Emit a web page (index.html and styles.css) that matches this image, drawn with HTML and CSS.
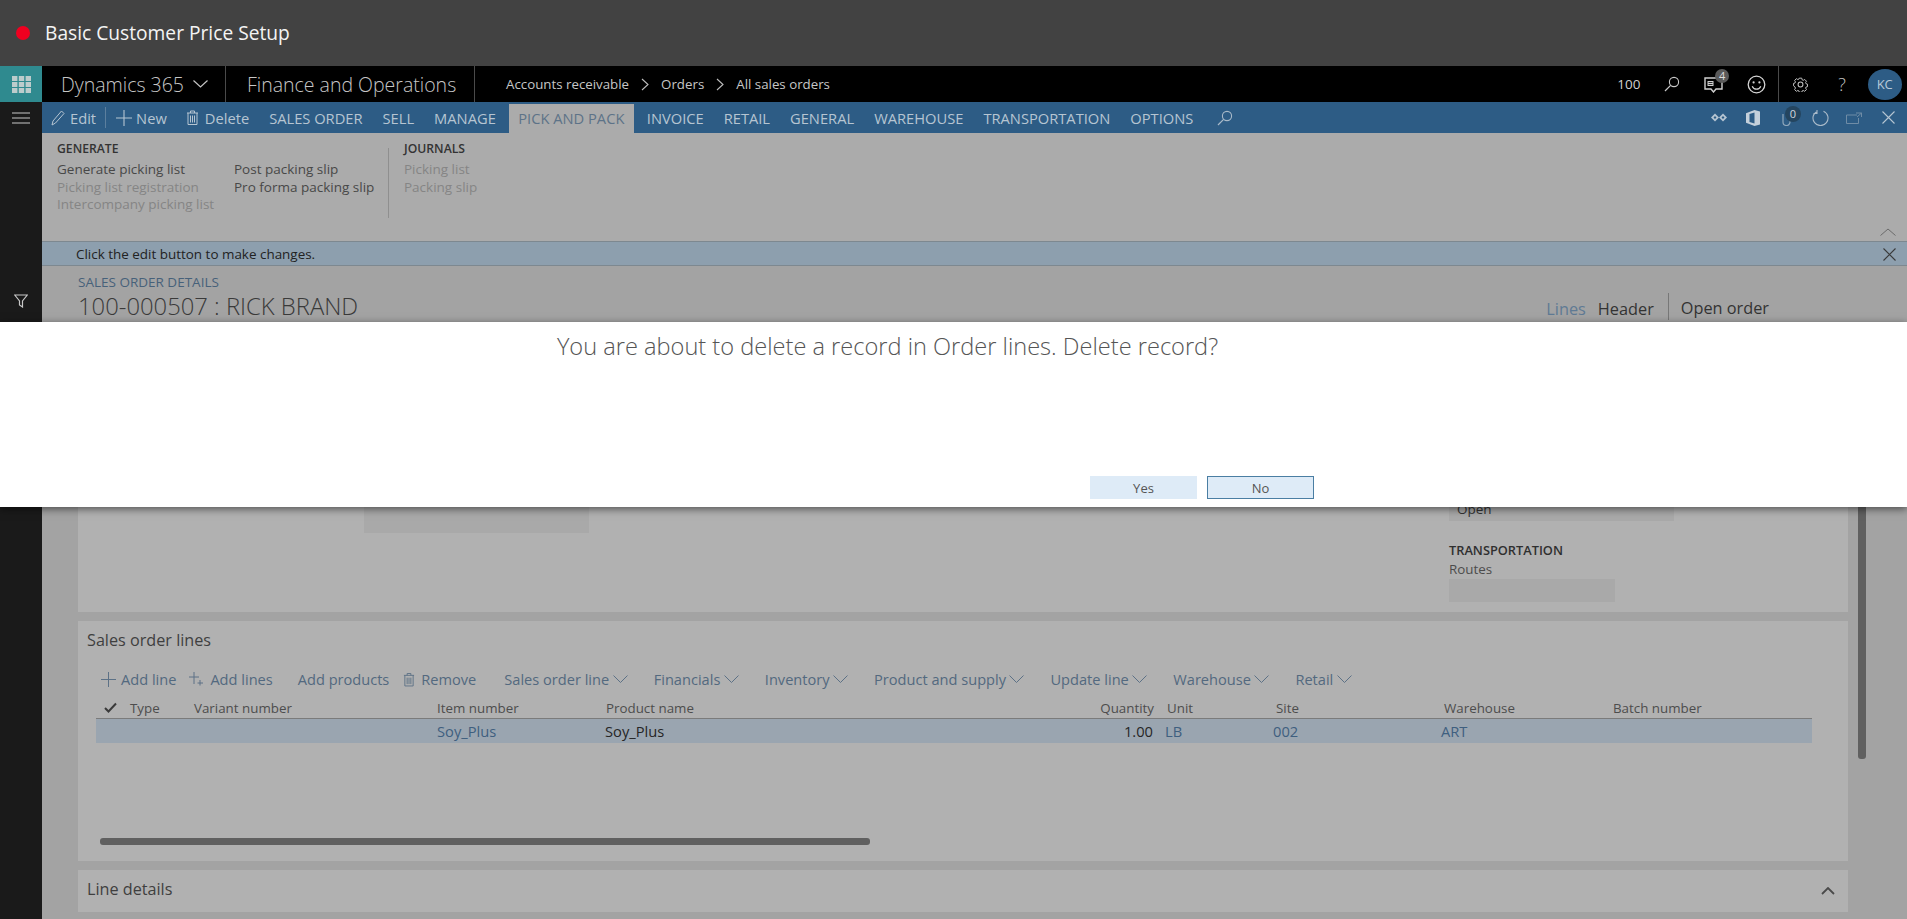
FILE: index.html
```html
<!DOCTYPE html>
<html lang="en">
<head>
  <meta charset="UTF-8" />
  <meta name="viewport" content="width=device-width, initial-scale=1.0"/>
  <title>Basic Customer Price Setup</title>
  <link rel="stylesheet" href="styles.css">
</head>
<body>
  <header class="titlebar">
    <span class="rec-dot"></span>
    <span class="titlebar-text">Basic Customer Price Setup</span>
  </header>

  <nav class="navbar">
    <div class="waffle">
      <svg width="19" height="17" viewBox="0 0 19 17"><g fill="#bccccc"><rect x="0" y="0" width="5.400" height="5"/><rect x="6.800" y="0" width="5.400" height="5"/><rect x="13.600" y="0" width="5.400" height="5"/><rect x="0" y="6" width="5.400" height="5"/><rect x="6.800" y="6" width="5.400" height="5"/><rect x="13.600" y="6" width="5.400" height="5"/><rect x="0" y="12" width="5.400" height="5"/><rect x="6.800" y="12" width="5.400" height="5"/><rect x="13.600" y="12" width="5.400" height="5"/></g></svg>
    </div>
    <div class="brand">Dynamics 365
      <svg class="brand-chev" width="15" height="8" viewBox="0 0 15 8"><path d="M.5.500l7 6.500 7-6.500" fill="none" stroke="#c4c4c4" stroke-width="1.200"/></svg>
    </div>
    <div class="module">Finance and Operations</div>
    <div class="crumbs">
      <span>Accounts receivable</span>
      <svg width="8" height="13" viewBox="0 0 8 13"><path d="M1 1l6 5.500L1 12" fill="none" stroke="#bdbdbd" stroke-width="1.100"/></svg>
      <span>Orders</span>
      <svg width="8" height="13" viewBox="0 0 8 13"><path d="M1 1l6 5.500L1 12" fill="none" stroke="#bdbdbd" stroke-width="1.100"/></svg>
      <span>All sales orders</span>
    </div>
    <div class="nav-right">
      <span class="company">100</span>
      <span class="nav-cell"><svg width="16" height="16" viewBox="0 0 16 16"><circle cx="10" cy="6" r="4.600" fill="none" stroke="#c8c8c8" stroke-width="1.100"/><path d="M6.600 9.400L1 15" stroke="#c8c8c8" stroke-width="1.200"/></svg></span>
      <span class="nav-cell msg-cell">
        <svg width="20" height="17" viewBox="0 0 20 17"><path d="M1 2h17v11h-6l-2.500 3L7 13H1z" fill="none" stroke="#d0d0d0" stroke-width="1.400"/><path d="M3.500 5h6v5h-6z" fill="#d0d0d0"/><path d="M4.500 6.500h4M4.500 8.500h4" stroke="#000" stroke-width=".8"/></svg>
        <span class="msg-badge">4</span>
      </span>
      <span class="nav-cell"><svg width="19" height="19" viewBox="0 0 19 19"><circle cx="9.500" cy="9.500" r="8.300" fill="none" stroke="#d4d4d4" stroke-width="1.300"/><circle cx="6.600" cy="7.400" r="1.100" fill="#d4d4d4"/><circle cx="12.400" cy="7.400" r="1.100" fill="#d4d4d4"/><path d="M5.200 11.200c1 2.200 2.600 3 4.300 3s3.300-.8 4.300-3" fill="none" stroke="#d4d4d4" stroke-width="1.200"/></svg></span>
      <span class="nav-cell nav-sep"><svg width="15" height="15" viewBox="0 0 16 16"><path d="M6.600 1h2.800l.4 1.900 1.300.6 1.700-1 2 2-1 1.700.6 1.300 1.600.4v2.800l-1.600.4-.6 1.300 1 1.700-2 2-1.700-1-1.300.6-.4 1.600H6.600l-.4-1.600-1.300-.6-1.700 1-2-2 1-1.700-.6-1.300L0 9.800V7l1.600-.4.6-1.300-1-1.700 2-2 1.700 1 1.300-.6z" transform="translate(.6 .3) scale(.93)" fill="none" stroke="#c4c4c4" stroke-width="1.100"/><circle cx="8" cy="8" r="2.600" fill="none" stroke="#c4c4c4" stroke-width="1.100"/></svg></span>
      <span class="nav-cell help">?</span>
      <span class="nav-cell"><span class="avatar">KC</span></span>
    </div>
  </nav>

  <div class="shell">
    <aside class="rail">
      <div class="rail-menu">
        <svg width="18" height="12" viewBox="0 0 18 12"><path d="M0 1h18M0 6h18M0 11h18" stroke="#c8c8c8" stroke-width="1.100"/></svg>
      </div>
      <div class="rail-filter">
        <svg width="14" height="14" viewBox="0 0 14 14"><path d="M.7 1h12.600L8.500 7v6L5.500 11V7z" fill="none" stroke="#c8c8c8" stroke-width="1.200"/></svg>
      </div>
    </aside>

    <main class="content">
      <div class="cmdbar">
        <span class="cmd cmd-edit">
          <svg width="14" height="16" viewBox="0 0 14 16"><path d="M10.500 1l2.500 2.500L4.500 13 1 15l1-4z" fill="none" stroke="#b6c5d2" stroke-width="1"/></svg>Edit
        </span>
        <span class="cmd cmd-new">
          <svg width="16" height="16" viewBox="0 0 16 16"><path d="M8 0v16M0 8h16" stroke="#b6c5d2" stroke-width="1.100"/></svg>New
        </span>
        <span class="cmd cmd-delete">
          <svg width="13" height="15" viewBox="0 0 13 15"><path d="M1 3h11M4.500 3V1h4v2M2 3v11.500h9V3M4.500 5.500v7M6.500 5.500v7M8.500 5.500v7" fill="none" stroke="#b6c5d2" stroke-width="1"/></svg>Delete
        </span>
        <span class="tab">SALES ORDER</span>
        <span class="tab">SELL</span>
        <span class="tab">MANAGE</span>
        <span class="tab tab-active">PICK AND PACK</span>
        <span class="tab">INVOICE</span>
        <span class="tab">RETAIL</span>
        <span class="tab">GENERAL</span>
        <span class="tab">WAREHOUSE</span>
        <span class="tab">TRANSPORTATION</span>
        <span class="tab">OPTIONS</span>
        <span class="tab tab-search"><svg width="16" height="16" viewBox="0 0 16 16"><circle cx="10" cy="6" r="4.600" fill="none" stroke="#a9bac9" stroke-width="1.100"/><path d="M6.600 9.400L1 15" stroke="#a9bac9" stroke-width="1.200"/></svg></span>
        <div class="cmd-right">
          <span class="cmd-cell"><svg width="16" height="9" viewBox="0 0 16 9"><g fill="#b6c5d2"><path d="M4 .5L8 4.500 4 8.500 0 4.500z"/><path d="M12 .5l4 4-4 4-4-4z"/></g><path d="M4 3L5.500 4.500 4 6 2.500 4.500zM12 3l1.500 1.500L12 6l-1.500-1.500z" fill="#2d5c85"/></svg></span>
          <span class="cmd-cell"><svg width="14" height="16" viewBox="0 0 14 16"><path d="M0 3.200L8.500 0 14 1.500v13L8.500 16 0 12.800z" fill="#c4d0db"/><path d="M8.500 2.500L3.500 4v8l5 1.500z" fill="#2d5c85"/></svg></span>
          <span class="cmd-cell clip-cell">
            <svg width="11" height="17" viewBox="0 0 11 17"><path d="M2 5v8a3.500 3.500 0 0 0 7 0V3.500" fill="none" stroke="#8fa7bb" stroke-width="1.200"/></svg>
            <span class="clip-badge">0</span>
          </span>
          <span class="cmd-cell"><svg width="17" height="17" viewBox="0 0 17 17"><path d="M5.500 2.200a7.500 7.500 0 1 0 6 0M5 1v3.500H1.500" fill="none" stroke="#a9bac9" stroke-width="1.100"/></svg></span>
          <span class="cmd-cell"><svg width="16" height="12" viewBox="0 0 16 12"><path d="M11 3H.5v8.500h12V6M10 1h5.500v4M15.500 1L11 5" fill="none" stroke="#6f8ca6" stroke-width="1"/></svg></span>
          <span class="cmd-cell"><svg width="13" height="13" viewBox="0 0 13 13"><path d="M.5.500l12 12M12.500.500l-12 12" stroke="#b6c5d2" stroke-width="1.100"/></svg></span>
        </div>
      </div>

      <section class="ribbon">
        <div class="ribbon-group">
          <h4 class="ribbon-head">GENERATE</h4>
          <div class="ribbon-cols">
            <ul class="ribbon-list">
              <li>Generate picking list</li>
              <li class="off">Picking list registration</li>
              <li class="off">Intercompany picking list</li>
            </ul>
            <ul class="ribbon-list">
              <li>Post packing slip</li>
              <li>Pro forma packing slip</li>
            </ul>
          </div>
        </div>
        <div class="ribbon-group ribbon-journals">
          <h4 class="ribbon-head">JOURNALS</h4>
          <ul class="ribbon-list">
            <li class="off">Picking list</li>
            <li class="off">Packing slip</li>
          </ul>
        </div>
        <svg class="ribbon-collapse" width="16" height="8" viewBox="0 0 16 8"><path d="M.5 7.500L8 1l7.500 6.500" fill="none" stroke="#6b6b6b" stroke-width="1"/></svg>
      </section>

      <div class="msgbar">
        <span>Click the edit button to make changes.</span>
        <svg class="msg-close" width="13" height="13" viewBox="0 0 13 13"><path d="M.5.500l12 12M12.500.500l-12 12" stroke="#3a3a3a" stroke-width="1.100"/></svg>
      </div>

      <div class="page">
        <div class="details-head">
          <div>
            <div class="caption">SALES ORDER DETAILS</div>
            <div class="record-title">100-000507 : RICK BRAND</div>
          </div>
          <div class="views">
            <span class="view-lines">Lines</span>
            <span class="view-header">Header</span>
            <span class="view-open">Open order</span>
          </div>
        </div>

        <section class="panel panel-header">
          <div class="blank-input blank-left"></div>
          <div class="side-fields">
            <div class="status-input">Open</div>
            <h4 class="field-head">TRANSPORTATION</h4>
            <div class="field-label">Routes</div>
            <div class="blank-input blank-routes"></div>
          </div>
        </section>

        <section class="panel panel-lines">
          <h3 class="panel-title">Sales order lines</h3>
          <div class="toolbar">
            <span class="tool tool-addline"><svg width="15" height="15" viewBox="0 0 15 15"><path d="M7.500 0v15M0 7.500h15" stroke="#5c7186" stroke-width="1"/></svg>Add line</span>
            <span class="tool tool-addlines"><svg width="14" height="14" viewBox="0 0 14 14"><path d="M5 0v12M0 5h10M11 8v5.500M8.500 11H14" stroke="#5c7186" stroke-width="1"/></svg>Add lines</span>
            <span class="tool tool-products">Add products</span>
            <span class="tool tool-remove"><svg width="12" height="15" viewBox="0 0 13 15"><path d="M1 3h11M4.500 3V1h4v2M2 3v11.500h9V3M4.500 5.500v7M6.500 5.500v7M8.500 5.500v7" fill="none" stroke="#5c7186" stroke-width="1"/></svg>Remove</span>
            <span class="tool menu tool-sol">Sales order line<svg width="15" height="8" viewBox="0 0 15 8"><path d="M.5.500l7 7 7-7" fill="none" stroke="#5c7186" stroke-width="1"/></svg></span>
            <span class="tool menu">Financials<svg width="15" height="8" viewBox="0 0 15 8"><path d="M.5.500l7 7 7-7" fill="none" stroke="#5c7186" stroke-width="1"/></svg></span>
            <span class="tool menu">Inventory<svg width="15" height="8" viewBox="0 0 15 8"><path d="M.5.500l7 7 7-7" fill="none" stroke="#5c7186" stroke-width="1"/></svg></span>
            <span class="tool menu">Product and supply<svg width="15" height="8" viewBox="0 0 15 8"><path d="M.5.500l7 7 7-7" fill="none" stroke="#5c7186" stroke-width="1"/></svg></span>
            <span class="tool menu">Update line<svg width="15" height="8" viewBox="0 0 15 8"><path d="M.5.500l7 7 7-7" fill="none" stroke="#5c7186" stroke-width="1"/></svg></span>
            <span class="tool menu">Warehouse<svg width="15" height="8" viewBox="0 0 15 8"><path d="M.5.500l7 7 7-7" fill="none" stroke="#5c7186" stroke-width="1"/></svg></span>
            <span class="tool menu">Retail<svg width="15" height="8" viewBox="0 0 15 8"><path d="M.5.500l7 7 7-7" fill="none" stroke="#5c7186" stroke-width="1"/></svg></span>
          </div>

          <div class="grid grid-head">
            <span class="check"><svg width="13" height="11" viewBox="0 0 13 11"><path d="M1 6l3.500 3.500L12 1.500" fill="none" stroke="#3a3a3a" stroke-width="2"/></svg></span>
            <span>Type</span>
            <span>Variant number</span>
            <span>Item number</span>
            <span>Product name</span>
            <span class="num">Quantity</span>
            <span>Unit</span>
            <span>Site</span>
            <span>Warehouse</span>
            <span>Batch number</span>
          </div>
          <div class="grid grid-row">
            <span></span>
            <span></span>
            <span></span>
            <span class="link">Soy_Plus</span>
            <span class="dark">Soy_Plus</span>
            <span class="num dark">1.00</span>
            <span class="link">LB</span>
            <span class="link">002</span>
            <span class="link">ART</span>
            <span></span>
          </div>
          <div class="hscroll"></div>
        </section>

        <section class="panel panel-details">
          <h3 class="panel-title">Line details</h3>
          <svg width="14" height="8" viewBox="0 0 14 8"><path d="M1 7l6-6 6 6" fill="none" stroke="#4a4a4a" stroke-width="1.800"/></svg>
        </section>

        <div class="vscroll"></div>
      </div>
    </main>
  </div>

  <div class="dialog">
    <p class="dialog-text">You are about to delete a record in Order lines. Delete record?</p>
    <div class="dialog-buttons">
      <button class="dialog-btn">Yes</button>
      <button class="dialog-btn dialog-btn-focus">No</button>
    </div>
  </div>
</body>
</html>
```

FILE: styles.css
```css
* { box-sizing: border-box; }
html, body { height: 100%; }
body {
  margin: 0; height: 919px; overflow: hidden; position: relative;
  font-family: "Open Sans", "Noto Sans", sans-serif; font-size: 12px; color: #333;
  background: #a3a3a3;
}
h3, h4, p, ul { margin: 0; padding: 0; font-weight: normal; }
ul { list-style: none; }
svg { display: block; flex: none; }

/* recording title */
.titlebar {
  height: 66px; background: #424242; display: flex; align-items: center; padding-left: 16px;
}
.rec-dot { width: 14px; height: 14px; border-radius: 50%; background: #f00020; margin-right: 15px; }
.titlebar-text { color: #f4f4f4; font-size: 19.200px; position: relative; top: -1px; }

/* top nav */
.navbar { height: 36px; background: #000; display: flex; align-items: center; color: #c6c6c6; }
.waffle {
  width: 42px; height: 36px; background: #2f8a8f;
  display: flex; align-items: center; justify-content: center;
}
.brand {
  width: 184px; height: 36px; padding-left: 19px; font-size: 19.500px; font-weight: 300;
  display: flex; align-items: center; border-right: 1px solid #4a4a4a;
}
.brand-chev { margin-left: 9px; }
.module {
  width: 249px; height: 36px; padding-left: 21px; font-size: 19.500px; font-weight: 300;
  display: flex; align-items: center; border-right: 1px solid #4a4a4a;
}
.crumbs { display: flex; align-items: center; gap: 12px; padding-left: 31px; font-size: 13.300px; }
.nav-right { margin-left: auto; display: flex; align-items: center; height: 36px; padding-right: 1px; }
.company { font-size: 13.500px; color: #d0d0d0; margin-right: 10px; }
.nav-cell {
  width: 42.600px; height: 36px; display: flex; align-items: center; justify-content: center; position: relative;
}
.nav-sep { border-left: 1px solid #4a4a4a; }
.help { font-size: 18px; font-weight: 300; color: #c4c4c4; }
.msg-badge {
  position: absolute; left: 22px; top: 3px; width: 14px; height: 14px; border-radius: 50%;
  background: #5a5a5a; color: #ddd; font-size: 11px; line-height: 14px; text-align: center;
}
.avatar {
  width: 34px; height: 31px; border-radius: 50%; background: #2d5c85; color: #b6c9da;
  font-size: 13px; display: flex; align-items: center; justify-content: center;
}

.shell { display: flex; height: 817px; }
.rail { width: 42px; background: #1a1a1a; flex: none; }
.rail-menu { height: 31px; display: flex; align-items: center; justify-content: center; }
.rail-filter { margin-top: 161px; display: flex; justify-content: center; }
.content { flex: 1; min-width: 0; display: flex; flex-direction: column; }

/* action pane */
.cmdbar { height: 31px; background: #2d5c85; display: flex; align-items: center; color: #b6c5d2; font-size: 14.700px; flex: none; }
.cmd { display: flex; align-items: center; height: 31px; }
.cmd-edit { padding: 0 10px 0 9px; gap: 5px; position: relative; }
.cmd-edit::after { content: ""; position: absolute; right: 0; top: 5px; bottom: 5px; width: 1px; background: #5c7f9e; }
.cmd-new { padding: 0 0 0 10px; gap: 4px; }
.cmd-delete { padding: 0 0 0 19px; gap: 6px; }
.tab { padding: 0 10px; height: 31px; line-height: 33px; font-size: 14.700px; white-space: nowrap; }
.cmd-delete + .tab { margin-left: 10px; }
.tab-active { background: #ababab; color: #5d7388; margin: 2px 3px 0 3px; height: 29px; line-height: 29px; width: 125px; text-align: center; padding: 0; }
.tab-search { display: flex; align-items: center; padding-left: 14px; }
.cmd-right { margin-left: auto; display: flex; padding-right: 2px; }
.cmd-cell { width: 33.800px; height: 31px; display: flex; align-items: center; justify-content: center; position: relative; }
.clip-badge {
  position: absolute; left: 15px; top: 4px; width: 16px; height: 16px; border-radius: 50%;
  background: #24455f; color: #d0d8df; font-size: 11px; line-height: 16px; text-align: center;
}

/* ribbon */
.ribbon { height: 108px; background: #ababab; display: flex; padding: 8px 0 0 15px; position: relative; flex: none; font-size: 13.500px; }
.ribbon-head { font-size: 12.200px; font-weight: 600; color: #333; line-height: 16px; margin-bottom: 4px; }
.ribbon-cols { display: flex; gap: 20px; }
.ribbon-cols .ribbon-list:first-child { width: 157px; }
.ribbon-list li { line-height: 17.500px; color: #484848; white-space: nowrap; }
.ribbon-list li.off { color: #858585; }
.ribbon-group { width: 331px; }
.ribbon-journals { border-left: 1px solid #8f8f8f; height: 70px; padding-left: 15px; margin-top: 7px; }
.ribbon-journals .ribbon-head { margin-top: -7px; }
.ribbon-collapse { position: absolute; right: 11px; top: 95px; }

/* message bar */
.msgbar {
  height: 25px; background: #8d9fae; border-top: 1px solid #7d8890; border-bottom: 1px solid #7d8890;
  display: flex; align-items: center; justify-content: space-between; padding: 1px 11px 0 34px;
  color: #222; font-size: 13.450px; flex: none;
}

/* form */
.page { flex: 1; min-height: 0; padding: 0 59px 0 36px; position: relative; background: #a3a3a3; }
.details-head { height: 56px; display: flex; justify-content: space-between; padding-top: 8px; }
.caption { color: #47617a; font-size: 13.500px; line-height: 16px; }
.record-title { color: #3a3a3a; font-size: 23.800px; font-weight: 300; line-height: 32px; }
.views { display: flex; align-items: flex-end; font-size: 16.300px; height: 46px; margin-right: 79px; color: #333; }
.view-lines { color: #5f7a94; margin-right: 12px; }
.view-header { margin-right: 14px; }
.view-open { border-left: 1px solid #777; padding-left: 12px; height: 27px; line-height: 30px; }

.panel { background: #b1b1b1; margin-bottom: 9px; position: relative; }
.panel-header { height: 290px; }
.blank-input { background: #a9a9a9; }
.blank-left { position: absolute; left: 286px; top: 160px; width: 225px; height: 51px; }
.side-fields { position: absolute; left: 1371px; top: 174px; }
.status-input { width: 225px; height: 25px; background: #a9a9a9; color: #333; padding: 1px 0 0 8px; font-size: 13.500px; line-height: 25px; }
.field-head { font-size: 12.800px; font-weight: 600; color: #2f2f2f; margin-top: 20px; line-height: 18px; }
.field-label { font-size: 13.400px; color: #4c4c4c; line-height: 21px; }
.blank-routes { width: 166px; height: 23px; margin-top: -1px; }

.panel-lines { height: 240px; padding: 9px 0 0 9px; }
.panel-title { font-size: 16.200px; color: #3f3f3f; line-height: 20px; }
.toolbar { display: flex; align-items: center; height: 24px; margin-top: 17px; padding-left: 14px; color: #53697f; font-size: 14.600px; }
.tool { display: flex; align-items: center; white-space: nowrap; }
.tool-addline { gap: 5px; }
.tool-addlines { gap: 7px; margin-left: 13px; }
.tool-products { margin-left: 25px; }
.tool-remove { gap: 6px; margin-left: 14px; }
.menu { gap: 3.500px; margin-left: 26px; }
.tool-sol { margin-left: 28px; }

.grid {
  display: grid; margin-left: 9px; width: 1716px;
  grid-template-columns: 34px 64px 243px 169px 489px 60px 121px 168px 169px 1fr;
  align-items: center;
}
.grid-head { height: 28px; border-bottom: 1px solid #7b7b7b; color: #4d4d4d; font-size: 13.350px; padding-top: 6px; }
.grid-row { height: 24px; background: #9aa5b0; font-size: 14.700px; }
.check { padding-left: 8px; }
.num { text-align: right; padding-right: 1px; }
.grid .num + span { padding-left: 12px; }
.grid-row .num + span { padding-left: 10px; }
.grid-row span:nth-child(n+8) { margin-left: -3px; }
.grid-row .num { padding-right: 2px; }
.link { color: #3f5f7f; }
.dark { color: #262626; }
.grid-row .dark:not(.num) { margin-left: -1px; }
.hscroll { height: 7px; width: 770px; margin: 95px 0 0 13px; background: #606060; border-radius: 3px; }

.panel-details { height: 42px; display: flex; align-items: center; justify-content: space-between; padding: 0 13px 4px 9px; }
.panel-details svg { margin-top: 4px; }

.vscroll { position: absolute; right: 41px; top: 60px; height: 433px; width: 8px; background: #606060; border-radius: 3px; }

/* delete prompt */
.dialog {
  position: absolute; left: 0; right: 0; top: 322px; height: 185px; background: #fff;
  box-shadow: 0 2px 8px rgba(0,0,0,0.55);
}
.dialog-text { text-align: center; font-size: 23.600px; font-weight: 300; color: #555; padding: 9px 0 0 0; line-height: 30px; width: 1775px; }
.dialog-buttons { position: absolute; left: 1090px; top: 154px; display: flex; gap: 10px; }
.dialog-btn {
  width: 107px; height: 23px; padding: 1px 0 0; border: none; background: #deebf7; color: #555;
  font-family: inherit; font-size: 13px; line-height: 22px;
}
.dialog-btn-focus { border: 1px solid #4a7ea3; padding: 0; line-height: 22px; }
```
